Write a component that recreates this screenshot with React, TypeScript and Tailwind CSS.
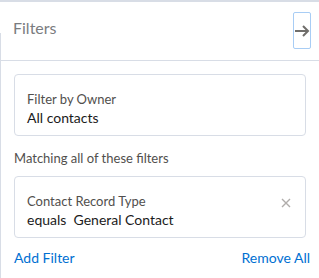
import React from "react";

const FilterCard = ({
  label,
  value,
  removable,
}: {
  label: string;
  value: React.ReactNode;
  removable?: boolean;
}) => {
  return (
    <div className="mx-[13px] h-[62px] rounded-[4px] border border-[#d8dde6] bg-white pl-[12px] pr-[13px] pt-[15px] flex justify-between">
      <div className="flex flex-col">
        <span className="text-[13px] leading-[18px] text-[#514f4d]">{label}</span>
        <span className="text-[14px] leading-[20px] text-[#1b1b1b]">{value}</span>
      </div>
      {removable && (
        <button className="mt-[5px] h-[12px] w-[12px] flex items-center justify-center text-[#b0adab]">
          <svg width="10" height="10" viewBox="0 0 10 10">
            <path d="M1 1L9 9M9 1L1 9" stroke="currentColor" strokeWidth="1.4" />
          </svg>
        </button>
      )}
    </div>
  );
};

const App = () => {
  return (
    <div
      className="w-[319px] h-[278px] bg-white border-t-2 border-[#d8dde6] overflow-hidden"
      style={{ fontFamily: "Lato, 'Open Sans', sans-serif" }}
    >
      {/* header */}
      <div className="relative h-[59px] border-b border-[#d8dde6] flex items-center justify-between pl-[13px] pr-[8px]">
        <span className="absolute left-0 top-[31px] bottom-[-1px] w-px bg-[#d8dde6]" />
        <h2 className="text-[16px] text-[#7a7c80] -mt-[6px]">Filters</h2>
        <button className="mt-[-1px] h-[37px] w-[18px] border border-[#a8cdf5] rounded-[2px] flex items-center justify-center text-[#706e6b]">
          <svg width="15" height="12" viewBox="0 0 15 12">
            <path d="M0 6H13M8 1L13 6L8 11" stroke="currentColor" strokeWidth="2" fill="none" />
          </svg>
        </button>
      </div>

      {/* body */}
      <div className="border-l border-[#d8dde6] h-full pt-[13px]">
        <FilterCard label="Filter by Owner" value="All contacts" />
        <p className="mx-[13px] mt-[13px] text-[13px] leading-[18px] text-[#514f4d]">
          Matching all of these filters
        </p>
        <div className="mt-[9px]">
          <FilterCard
            label="Contact Record Type"
            value={<>equals&nbsp;&nbsp;General Contact</>}
            removable
          />
        </div>
        <div className="mx-[9px] mt-[9px] flex justify-between text-[14px] text-[#0070d2]">
          <a href="#" className="px-[4px]">Add Filter</a>
          <a href="#" className="px-[0px]">Remove All</a>
        </div>
      </div>
    </div>
  );
};

export default App;
